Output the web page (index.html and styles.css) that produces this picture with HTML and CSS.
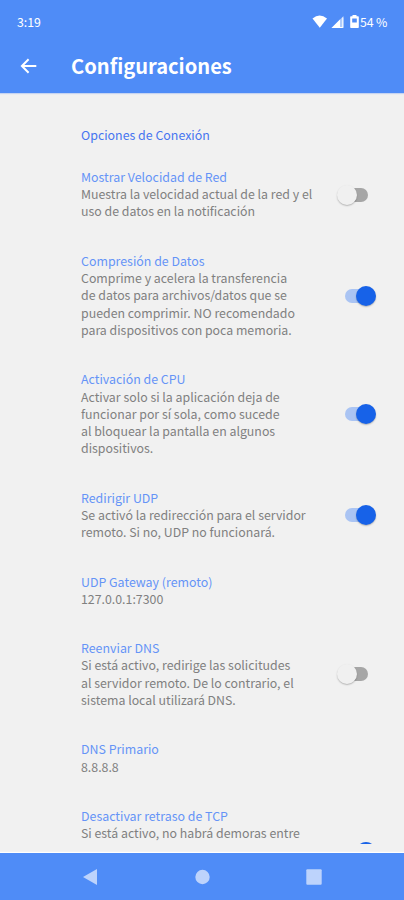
FILE: index.html
```
<!DOCTYPE html>
<html lang="es">
<head>
<meta charset="utf-8">
<title>Configuraciones</title>
<link rel="stylesheet" href="styles.css">
</head>
<body>
<div class="screen">
  <header class="header">
    <div class="status">
      <span class="clock">3:19</span>
      <svg class="status-icons" width="48" height="16" viewBox="0 0 48 16" fill="#fff">
        <path d="M0.5 4.5Q7.5-1.3 15 4.5L7.800 13.700Z"/>
        <path d="M31.500 2V14H19.500Z" opacity=".55"/>
        <path d="M28 5.500V14H19.500Z"/>
        <path d="M30.800 3.500V13.500H28" fill="none" stroke="#fff" stroke-width="1"/>
        <path fill-rule="evenodd" d="M40.500 1h4v1.300h1.600q.7 0 .7.8v10.200q0 .8-.8.8h-7q-.8 0-.8-.8V3.100q0-.8.8-.8h1.500zM40.200 4.500v4h4.600v-4z"/>
      </svg>
      <span class="battery">54 %</span>
    </div>
    <div class="toolbar">
      <svg class="back" width="18" height="16" viewBox="0 0 18 16" fill="none" stroke="#fff" stroke-width="2">
        <path d="M16.300 8H2.200M8.600 1.300L1.900 8L8.600 14.700"/>
      </svg>
      <h1 class="heading">Configuraciones</h1>
    </div>
  </header>
  <main class="settings">
    <h2 class="section">Opciones de Conexión</h2>
    <div class="item">
      <div class="copy"><div class="title">Mostrar Velocidad de Red</div>
      <div class="desc">Muestra la velocidad actual de la red y el<br>uso de datos en la notificación</div></div>
      <span class="switch"></span>
    </div>
    <div class="item">
      <div class="copy"><div class="title">Compresión de Datos</div>
      <div class="desc">Comprime y acelera la transferencia<br>de datos para archivos/datos que se<br>pueden comprimir. NO recomendado<br>para dispositivos con poca memoria.</div></div>
      <span class="switch on"></span>
    </div>
    <div class="item">
      <div class="copy"><div class="title">Activación de CPU</div>
      <div class="desc">Activar solo si la aplicación deja de<br>funcionar por sí sola, como sucede<br>al bloquear la pantalla en algunos<br>dispositivos.</div></div>
      <span class="switch on"></span>
    </div>
    <div class="item">
      <div class="copy"><div class="title">Redirigir UDP</div>
      <div class="desc">Se activó la redirección para el servidor<br>remoto. Si no, UDP no funcionará.</div></div>
      <span class="switch on"></span>
    </div>
    <div class="item">
      <div class="copy"><div class="title">UDP Gateway (remoto)</div>
      <div class="desc">127.0.0.1:7300</div></div>
    </div>
    <div class="item">
      <div class="copy"><div class="title">Reenviar DNS</div>
      <div class="desc">Si está activo, redirige las solicitudes<br>al servidor remoto. De lo contrario, el<br>sistema local utilizará DNS.</div></div>
      <span class="switch"></span>
    </div>
    <div class="item">
      <div class="copy"><div class="title">DNS Primario</div>
      <div class="desc">8.8.8.8</div></div>
    </div>
    <div class="item last">
      <div class="copy"><div class="title">Desactivar retraso de TCP</div>
      <div class="desc">Si está activo, no habrá demoras entre</div></div>
      <span class="switch on"></span>
    </div>
  </main>
  <nav class="navbar">
    <svg width="16" height="18" viewBox="0 0 16 18"><path d="M1 9L15 1V17Z"/></svg>
    <svg width="16" height="16" viewBox="0 0 16 16"><circle cx="8.500" cy="8" r="7.200"/></svg>
    <svg width="16" height="16" viewBox="0 0 16 16"><rect x=".3" y=".3" width="15.400" height="15.400" rx="1"/></svg>
  </nav>
</div>
</body>
</html>
```
FILE: styles.css
```
* { box-sizing: border-box; }
body {
  margin: 0;
  font-family: "Noto Sans CJK SC", "Noto Sans", sans-serif;
  background: #f1f1f1;
}
.screen {
  width: 404px;
  height: 900px;
  display: flex;
  flex-direction: column;
  overflow: hidden;
  background: #f1f1f1;
}
.header {
  height: 93px;
  flex: none;
  background: #4f8cf7;
  color: #fff;
  box-shadow: 0 1px 1px #c6d4f1;
}
.status {
  height: 44px;
  display: flex;
  align-items: center;
  padding: 0 16px 0 17px;
  font-size: 12.3px;
  line-height: 18px;
}
.clock { margin-right: auto; }
.battery { width: 28px; letter-spacing: -0.1px; white-space: nowrap; }
.toolbar {
  height: 43px;
  display: flex;
  align-items: center;
  padding-left: 20px;
}
.back { margin-right: 33px; }
.heading {
  margin: 0;
  font-size: 20.1px;
  line-height: 28px;
  font-weight: 700;
}
.settings {
  height: 751px;
  flex: none;
  overflow: hidden;
  padding: 34px 27px 0 81px;
  font-size: 12.35px;
  line-height: 17.3px;
  white-space: nowrap;
}
.section {
  margin: 0;
  height: 25.3px;
  font-size: 12.4px;
  font-weight: 400;
  color: #4775f0;
}
.item {
  display: flex;
  align-items: center;
  justify-content: space-between;
  padding: 16px 0 15.4px;
}
.copy { padding-top: .6px; }
.last { height: 118.5px; align-items: flex-start; }
.last .switch { margin-top: 34.3px; }
.title { font-size: 12.4px; color: #6594f7; }
.desc { color: #808080; }
.switch {
  width: 40px;
  height: 20px;
  flex: none;
  position: relative;
}
.switch::before {
  content: "";
  position: absolute;
  left: 8px;
  top: 3px;
  width: 23px;
  height: 14px;
  border-radius: 7px;
  background: #a6a6a6;
}
.switch::after {
  content: "";
  position: absolute;
  left: 0;
  top: 0;
  width: 20px;
  height: 20px;
  border-radius: 50%;
  background: #f0f0f0;
  box-shadow: 0 1px 1.5px rgba(0, 0, 0, .25);
}
.switch.on::before { background: #aac4f3; }
.switch.on::after { left: 19px; background: #1762e8; }
.last .switch::before { top: 5px; }
.navbar {
  height: 47px;
  margin-top: auto;
  flex: none;
  display: flex;
  justify-content: space-between;
  align-items: center;
  padding: 0 82px;
  background: #4f8cf7;
  fill: #bdd3fc;
  box-shadow: 0 -1px 1px #fff;
}
```
